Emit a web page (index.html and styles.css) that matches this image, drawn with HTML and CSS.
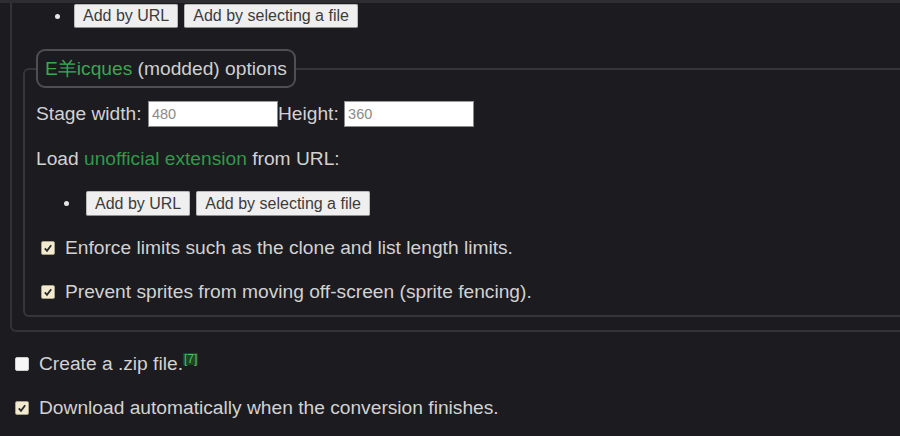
FILE: index.html
```html
<!DOCTYPE html>
<html>
<head>
<meta charset="utf-8">
<link rel="stylesheet" href="styles.css">
</head>
<body>
<div class="strip"></div>
<div class="outer">
  <ul class="btn-list top-list">
    <li><button class="btn">Add by URL</button><button class="btn">Add by selecting a file</button></li>
  </ul>
  <fieldset class="inner">
    <legend class="legend"><span class="green-bright">E羊icques</span> (modded) options</legend>
    <div class="dims">Stage width: <input class="num" type="text" value="480">Height: <input class="num" type="text" value="360"></div>
    <p class="line load">Load <a class="link">unofficial extension</a> from URL:</p>
    <ul class="btn-list inner-list">
      <li><button class="btn">Add by URL</button><button class="btn">Add by selecting a file</button></li>
    </ul>
    <label class="line check first-check"><span class="cb on"><svg viewBox="0 0 14 14" width="14" height="14"><path d="M3.8 7.4 L6 9.8 L10.2 4.2" fill="none" stroke="#2a2a2a" stroke-width="1.8"/></svg></span>Enforce limits such as the clone and list length limits.</label>
    <label class="line check second-check"><span class="cb on"><svg viewBox="0 0 14 14" width="14" height="14"><path d="M3.8 7.4 L6 9.8 L10.2 4.2" fill="none" stroke="#2a2a2a" stroke-width="1.8"/></svg></span>Prevent sprites from moving off-screen (sprite fencing).</label>
  </fieldset>
</div>
<label class="line check zip"><span class="cb off"></span>Create a .zip file.<sup class="ref">[7]</sup></label>
<label class="line check dl"><span class="cb on"><svg viewBox="0 0 14 14" width="14" height="14"><path d="M3.8 7.4 L6 9.8 L10.2 4.2" fill="none" stroke="#2a2a2a" stroke-width="1.8"/></svg></span>Download automatically when the conversion finishes.</label>
</body>
</html>
```
FILE: styles.css
```css
html, body {
  margin: 0;
  padding: 0;
}
body {
  background: #1c1b20;
  color: #d2d2d2;
  font-family: "Liberation Sans", Arial, sans-serif;
  font-size: 19.2px;
  width: 900px;
  height: 436px;
  overflow: hidden;
}
.strip {
  height: 3px;
  background: #2e2d32;
}
.outer {
  margin-left: 10px;
  border-left: 2px solid #333238;
  border-bottom: 2px solid #333238;
  border-bottom-left-radius: 6px;
  padding: 1px 0 13px 0;
}
.btn-list {
  list-style: none;
  margin: 0;
  padding: 0;
}
.btn-list li {
  display: flex;
  align-items: center;
  gap: 6px;
}
.btn-list li::before {
  content: "";
  width: 5px;
  height: 5px;
  border-radius: 50%;
  background: #e6e6e6;
  margin-right: 8px;
}
.top-list li {
  padding-left: 43px;
}
.inner-list {
  margin-top: 21px;
}
.inner-list li {
  padding-left: 28px;
}
.inner-list li::before {
  margin-right: 11px;
}
.btn {
  font-family: "Liberation Sans", Arial, sans-serif;
  font-size: 16px;
  color: #3c3c3c;
  background: #efefef;
  border: 1px solid #b9b9b9;
  border-bottom-color: #8f8f8f;
  border-radius: 2px;
  height: 25px;
  padding: 0 8px;
  margin: 0;
}
.top-list .btn { height: 24px; }
.inner {
  margin: 21px 0 0 11px;
  border: 2px solid #36353b;
  border-right: none;
  border-radius: 6px 0 0 6px;
  padding: 13px 0 12px 11px;
  min-width: 0;
}
.legend {
  border: 2px solid #4f4e55;
  border-radius: 9px;
  padding: 0 7px;
  height: 35px;
  line-height: 35px;
  color: #d0d0d0;
}
.green-bright {
  color: #3aa653;
}
.dims {
  display: flex;
  align-items: center;
  height: 26px;
  white-space: pre;
}
.num {
  width: 130px;
  height: 26px;
  box-sizing: border-box;
  border: 1px solid #8a8a8a;
  border-top-color: #9a9a9a;
  background: #fff;
  color: #8a8a8a;
  font-family: "Liberation Sans", Arial, sans-serif;
  font-size: 14.5px;
  padding: 0 3px;
  margin: 0;
}
.dims .num:first-of-type {
  margin-left: 1px;
}
.line {
  display: flex;
  align-items: center;
  height: 22px;
  line-height: 22px;
  margin: 0;
}
.load {
  margin-top: 21px;
  display: block;
}
.link {
  color: #2f9a48;
}
.check {
  white-space: nowrap;
}
.first-check {
  margin-top: 21px;
  padding-left: 5px;
}
.second-check {
  margin-top: 22px;
  padding-left: 5px;
}
.cb {
  width: 14px;
  height: 14px;
  box-sizing: border-box;
  border-radius: 2px;
  margin-right: 10px;
  flex: none;
  display: flex;
}
.cb svg {
  display: block;
  margin: -1px;
}
.cb.on {
  background: #f2ebcf;
  border: 1px solid #a9a288;
}
.cb.off {
  background: #f7f7f7;
  border: 1px solid #cfcfcf;
}
.zip {
  margin-top: 21px;
  padding-left: 15px;
}
.dl {
  margin-top: 22px;
  padding-left: 15px;
}
.ref {
  font-size: 12px;
  font-weight: normal;
  color: #4fc266;
  background: #1d4429;
  line-height: 12px;
  align-self: flex-start;
  margin-top: 0;
  padding: 0 1px;
}
```
